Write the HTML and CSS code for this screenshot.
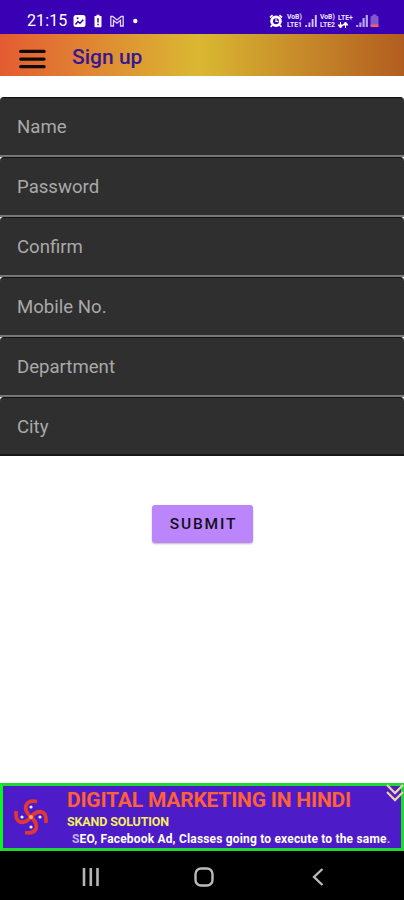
FILE: index.html
```html
<!DOCTYPE html>
<html lang="en">
<head>
<meta charset="utf-8">
<title>Sign up</title>
<link rel="stylesheet" href="styles.css">
</head>
<body>
<div class="screen">
  <div class="status">
    <span class="time">21:15</span>
    <svg class="notifications" width="66" height="14" viewBox="0 0 66 14">
      <rect x="0.5" y="1" width="12" height="12" rx="2.5" fill="#fff"/>
      <path d="M2.500 10.500l2.500-3 2 1.700 3.300-3.400" fill="none" stroke="#3900b4" stroke-width="1.500"/>
      <circle cx="4.600" cy="4.200" r="1" fill="#3900b4"/>
      <path d="M21.500 2h2V.8h3V2h2v10.500q0 .7-.7.7h-5.600q-.7 0-.7-.7z" fill="#fff"/>
      <path d="M25 4v4.600M25 9.800v1.500" stroke="#3900b4" stroke-width="1.500"/>
      <path d="M37.800 2.500v9.500h2.700V6.300l3.500 2.900 3.500-2.900V12h2.700V2.500h-2L44 6l-4.200-3.500z" fill="none" stroke="#e2d8ff" stroke-width="1.300"/>
      <circle cx="62.300" cy="7" r="2.200" fill="#fff"/>
    </svg>
    <div class="indicators">
      <svg width="14" height="14" viewBox="0 0 14 14">
        <circle cx="7" cy="7.200" r="5.800" fill="#fff"/>
        <path d="M1 3.500L3.600 1.200M13 3.500l-2.600-2.300M3 11.300l-1.300 1.600M11 11.300l1.300 1.600" stroke="#fff" stroke-width="1.700"/>
        <circle cx="7" cy="7.200" r="3" fill="#3900b4"/>
        <path d="M7 4.600v2.800h2.300" fill="none" stroke="#fff" stroke-width="1.200"/>
      </svg>
      <span class="network sim1"><span>VoB)</span><span>LTE1</span></span>
      <svg class="bars" width="12" height="14" viewBox="0 0 12 14">
        <path d="M1.200 13v-2M4.400 13V8.500M7.600 13V5M10.800 13V1" stroke="#d2c4f5" stroke-width="1.900"/>
      </svg>
      <span class="network sim2"><span>VoB)</span><span>LTE2</span></span>
      <span class="network data"><span>LTE+</span><svg width="10" height="6" viewBox="0 0 10 6"><path d="M0 3h5L2.500 6zM5 3h5L7.500 0zM2.500 0v4M7.500 2v4" fill="#fff" stroke="#fff" stroke-width="1"/></svg></span>
      <svg class="bars2" width="12" height="14" viewBox="0 0 12 14">
        <path d="M1.200 13v-2M4.400 13V8.500M7.600 13V4M10.800 13V1" stroke="#b9a6e9" stroke-width="2.200"/>
      </svg>
      <svg class="battery" width="9" height="14" viewBox="0 0 9 14">
        <path d="M.5 3q0-1 1-1h1V.5h4V2h1q1 0 1 1v8h-8z" fill="#8157cf"/>
        <path d="M.5 10.500h8V13h-8z" fill="#ee655f"/>
      </svg>
    </div>
  </div>

  <header class="appbar">
    <svg class="menu" width="28" height="22" viewBox="0 0 28 22">
      <path d="M2.700 3.400h23.400M2.700 11.100h23.400M2.700 18.700h23.400" stroke="#100a0b" stroke-width="3.200" stroke-linecap="round"/>
    </svg>
    <h1 class="title">Sign up</h1>
  </header>

  <main class="form">
    <div class="field"><span>Name</span></div>
    <div class="field"><span>Password</span></div>
    <div class="field"><span>Confirm</span></div>
    <div class="field"><span>Mobile No.</span></div>
    <div class="field"><span>Department</span></div>
    <div class="field"><span>City</span></div>
    <button class="submit">SUBMIT</button>
  </main>

  <section class="banner">
    <svg class="logo" width="34" height="38" viewBox="-17 -19 34 38">
      <g fill="none" stroke="#e23831" stroke-width="3.800">
        <path d="M6-15.500Q-3-17-5-11.500Q-6.500-5.500 0 0"/>
        <path d="M6-15.500Q-3-17-5-11.500Q-6.500-5.500 0 0" transform="rotate(90) scale(1 .95)"/>
        <path d="M6-15.500Q-3-17-5-11.500Q-6.500-5.500 0 0" transform="rotate(180)"/>
        <path d="M6-15.500Q-3-17-5-11.500Q-6.500-5.500 0 0" transform="rotate(270) scale(1 .95)"/>
      </g>
      <circle r="2" fill="#ffae68"/>
      <g fill="#e8eaff"><circle cy="-10" r="1.600"/><circle cx="9" r="1.600"/><circle cy="10" r="1.600"/><circle cx="-9" r="1.600"/></g>
    </svg>
    <div class="copy">
      <div class="headline">DIGITAL MARKETING IN HINDI</div>
      <div class="company">SKAND SOLUTION</div>
      <div class="ticker"><span class="fade">S</span>EO, Facebook Ad, Classes going to execute to the same<span class="fade">.</span></div>
    </div>
    <svg class="collapse" width="18" height="20" viewBox="0 0 18 20">
      <path d="M1 2l8 8 8-8M1 9l8 8 8-8" fill="none" stroke="#ead0a4" stroke-width="2.300"/>
    </svg>
  </section>

  <nav class="navigation">
    <svg width="18" height="18" viewBox="0 0 18 18"><path d="M2 0v18M8.800 0v18M15.500 0v18" stroke="#b5b5b5" stroke-width="2.600"/></svg>
    <svg class="home" width="20" height="20" viewBox="0 0 20 20"><rect x="1.500" y="1.500" width="17" height="17" rx="5.500" fill="none" stroke="#bcbcbc" stroke-width="2.400"/></svg>
    <svg width="12" height="18" viewBox="0 0 12 18"><path d="M10.500 1L2 9l8.500 8" fill="none" stroke="#bcbcbc" stroke-width="2.300"/></svg>
  </nav>
</div>
</body>
</html>
```
FILE: styles.css
```css
* {
  box-sizing: border-box;
}

body {
  margin: 0;
  background: #fff;
  font-family: Roboto, "Liberation Sans", sans-serif;
}

.screen {
  width: 404px;
  height: 900px;
  display: flex;
  flex-direction: column;
  overflow: hidden;
}

.status {
  height: 34px;
  flex: none;
  display: flex;
  align-items: center;
  padding: 7px 25px 0 27px;
  background: #3900b4;
  color: #fff;
}

.time {
  width: 46px;
  font-size: 16px;
  line-height: 20px;
  letter-spacing: 0.1px;
}

.indicators {
  display: flex;
  align-items: center;
  margin-left: auto;
}

.network {
  display: flex;
  flex-direction: column;
  font-size: 6.8px;
  font-weight: 700;
  line-height: 8px;
  color: #eee7ff;
  white-space: nowrap;
}

.sim1 {
  width: 18px;
  margin-left: 4px;
}

.sim2 {
  width: 17px;
  margin-left: 3px;
}

.data {
  width: 17px;
  padding-left: 1px;
}

.bars2 {
  margin-left: 2px;
}

.battery {
  margin-left: 2px;
}

.appbar {
  height: 42px;
  flex: none;
  display: flex;
  align-items: center;
  padding-left: 18px;
  background: linear-gradient(90deg, #e45b32 0%, #dab832 49%, #b25d20 100%);
}

.menu {
  margin-top: 8px;
}

.title {
  margin: 3px 0 0 26px;
  font-size: 21px;
  font-weight: 500;
  line-height: 26px;
  color: #371693;
}

.form {
  flex: 1;
  display: flex;
  flex-direction: column;
  padding-top: 21px;
}

.field {
  height: 60px;
  flex: none;
  display: flex;
  align-items: center;
  padding: 1px 17px 0;
  border-top: 1px solid #111;
  border-bottom: 2px solid #777;
  border-radius: 4px 4px 0 0;
  background: #2f2f2f;
  color: #a9a9a9;
  font-size: 18.6px;
  line-height: 24px;
}

.field:nth-child(6) {
  height: 59px;
  border-bottom-color: #181818;
}

.submit {
  width: 101px;
  height: 38px;
  margin: 49px auto 0;
  padding: 0 0 0 3px;
  border: 0;
  border-radius: 3px;
  background: #bb86fc;
  box-shadow: 0 1px 2px #0004;
  color: #160c20;
  font: 500 15.5px Roboto, sans-serif;
  letter-spacing: 1.8px;
}

.banner {
  position: relative;
  height: 68px;
  flex: none;
  display: flex;
  border: 3px solid #21d832;
  border-left-color: #0cf51d;
  background: #4d1bc7;
}

.logo {
  margin: 12px 0 0 11px;
}

.copy {
  margin-left: 19px;
  padding-top: 2px;
  white-space: nowrap;
}

.headline {
  color: #ff6035;
  font-size: 21px;
  font-weight: 700;
  line-height: 24px;
  letter-spacing: -0.21px;
}

.company {
  color: #f5ed62;
  font-size: 12.5px;
  font-weight: 700;
  line-height: 20px;
  letter-spacing: -0.15px;
}

.ticker {
  padding-left: 5px;
  color: #fff;
  font-size: 12px;
  font-weight: 700;
  line-height: 14px;
  letter-spacing: 0.18px;
}

.fade {
  opacity: 0.65;
}

.collapse {
  position: absolute;
  top: -3px;
  right: -3px;
}

.navigation {
  height: 49px;
  flex: none;
  display: flex;
  align-items: center;
  justify-content: space-between;
  padding: 3px 80px 0 82px;
  background: #000;
}

.home {
  margin-right: 4px;
}
```
